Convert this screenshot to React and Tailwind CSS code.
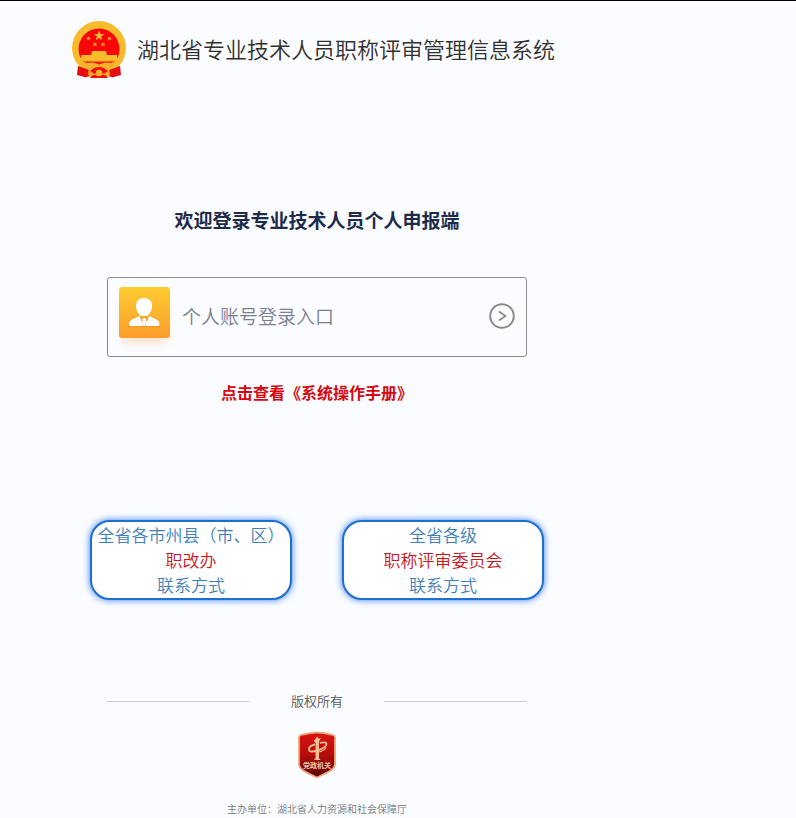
function Emblem() {
  return (
    <svg viewBox="0 0 56 60" className="h-[60px] w-14 shrink-0" aria-hidden="true">
      <circle cx="28" cy="28" r="27" fill="#f9bb2e" />
      <circle cx="28" cy="29" r="20.500" fill="#fa0508" />
      <path
        d="M28 10.500 L29.300 14.100 L33.100 14.200 L30.100 16.500 L31.200 20.200 L28 18 L24.800 20.200 L25.900 16.500 L22.900 14.200 L26.700 14.100 Z"
        fill="#fbc02d"
      />
      <g fill="#f99a26">
        <path d="M17.500 16 l.8 1.500 1.700.2-1.300 1.100.4 1.700-1.600-.9-1.600.9.4-1.700-1.300-1.100 1.700-.2z" />
        <path d="M38.500 16 l.8 1.500 1.700.2-1.300 1.100.4 1.700-1.600-.9-1.600.9.4-1.700-1.300-1.100 1.700-.2z" />
        <path d="M24 22 l.8 1.500 1.700.2-1.300 1.100.4 1.700-1.600-.9-1.600.9.4-1.700-1.300-1.100 1.700-.2z" />
        <path d="M32 22 l.8 1.500 1.700.2-1.300 1.100.4 1.700-1.600-.9-1.600.9.4-1.700-1.300-1.100 1.700-.2z" />
      </g>
      <path d="M21 31 H35 L36 35 H46 V40 H10 V35 H20 Z" fill="#fbbc2c" />
      <path d="M9 40 H47 L44 46 L36 51 H20 L12 46 Z" fill="#f9b12a" />
      <path d="M12 41.500 H44 L40 43 L34 42.500 L28 44.500 L22 42.500 L16 43 Z" fill="#f2180c" />
      <path d="M7 46 L18 50 L15 57.500 L6 55 Z" fill="#e60b0e" />
      <path d="M49 46 L38 50 L41 57.500 L50 55 Z" fill="#e60b0e" />
      <path d="M19 51 Q28 43 37 51 L34 53 L37 58 H19 L22 53 Z" fill="#f20d0b" />
      <path d="M13 51 L20 53 H36 L43 51 L41 57 L33 55.500 L31 57.500 H25 L23 55.500 L15 57 Z" fill="#f20d0b" />
      <circle cx="28" cy="53" r="3.200" fill="#fbb42a" />
      <path
        d="M17 52.500 L23 53.500 H33 L39 52.500 L38 56.500 L32 54.800 H24 L18 56.500 Z"
        fill="#fbb42a"
      />
    </svg>
  );
}

function PersonIcon() {
  return (
    <svg viewBox="0 0 51 51" className="size-[51px]" aria-hidden="true">
      <defs>
        <linearGradient id="person-bg" x1="0" y1="0" x2="0" y2="1">
          <stop offset="0" stopColor="#fdcc30" />
          <stop offset="1" stopColor="#fb9d2c" />
        </linearGradient>
      </defs>
      <rect width="51" height="51" rx="3" fill="url(#person-bg)" />
      <path d="M10 40 C10 33 15 33 20 30 H31 C36 33 41 33 41 40 Z" fill="#e68a20" opacity=".5" />
      <path
        d="M25 11 C30 11 33 14 33 19 C33 24 30 28.500 27 29 H23 C20 28.500 17 24 17 19 C17 14 20 11 25 11 Z"
        fill="#fff"
      />
      <path
        d="M20.500 29 L23 34.500 L24 31 H26.500 L27.500 34.500 L30 29 C35 32 40.500 32 40.500 37.500 Q40.500 39 39 39 H27 L26 32.500 H24.500 L23.500 39 H12 Q10 39 10 37.500 C10 32 16 32 20.500 29 Z"
        fill="#fff"
      />
      <path d="M23.500 33 L24.300 39 H26.200 L27 33 L26 31 H24.500 Z" fill="#fff" />
      <path d="M21.500 30 L23.300 34.500 M29 30 L27.200 34.500" stroke="#f5a32b" strokeWidth="1" />
    </svg>
  );
}

function Shield() {
  return (
    <svg viewBox="0 0 40 48" className="h-12 w-10" role="img" aria-label="党政机关">
      <defs>
        <linearGradient id="shield-bg" x1="0" y1="0" x2="0" y2="1">
          <stop offset="0" stopColor="#dc1210" />
          <stop offset="0.5" stopColor="#b50c0b" />
          <stop offset="1" stopColor="#570604" />
        </linearGradient>
      </defs>
      <path
        d="M20 1.500 C25 1.500 32 3 36 4 Q38 4.500 38 6.500 V33 C38 39 29 42 20 46.500 C11 42 2 39 2 33 V6.500 Q2 4.500 4 4 C8 3 15 1.500 20 1.500 Z"
        fill="url(#shield-bg)"
        stroke="#e9a77d"
        strokeWidth="1.800"
      />
      <path
        d="M18.500 8 L20 5.500 L21.500 7.500 L24 7 L22.500 9.500 L22 12 V27 L23.500 29 H17 L18.500 27 V12 L16.500 9.500 Z"
        fill="#f5bd94"
      />
      <path
        d="M18 13.500 C11 15 10 20.500 15 20.500 C21 20.500 29.500 16 29.500 13 C29.500 11 26 11 23 12"
        fill="none"
        stroke="#f5bd94"
        strokeWidth="1.800"
      />
      <path d="M22 21 Q27 20 29 16.500" fill="none" stroke="#f5bd94" strokeWidth="1.200" />
      <text x="20" y="37" textAnchor="middle" fontSize="7" fontWeight="700" fill="#f5c9a6">
        党政机关
      </text>
    </svg>
  );
}

function ContactLink({ scope, office }) {
  return (
    <a
      href="#contact"
      className="h-20 min-w-0 flex-1 rounded-[20px] border-2 border-[#1f6fd0] bg-white text-center text-[17px] leading-[25px] font-[350] whitespace-nowrap text-[#3f7fb8] shadow-[0_0_7px_#2f7cf0]"
    >
      <span className="block">{scope}</span>
      <span className="block text-[#c8161d]">{office}</span>
      <span className="block">联系方式</span>
    </a>
  );
}

export default function App() {
  return (
    <div className="min-h-screen border-t border-black bg-[#fbfcff] font-['Noto_Sans_CJK_SC',sans-serif]">
      <div className="flex w-full max-w-[634px] flex-col">
        <header className="flex items-center gap-2.5 pt-[19px] pl-[71px]">
          <Emblem />
          <h1 className="pb-1 text-[22px] leading-8 font-[350] whitespace-nowrap text-[#303030]">
            湖北省专业技术人员职称评审管理信息系统
          </h1>
        </header>

        <main className="flex flex-col items-center pt-[126px]">
          <h2 className="text-[19px] leading-7 font-bold text-[#1e2c4a]">
            欢迎登录专业技术人员个人申报端
          </h2>

          <button
            type="button"
            className="mt-[43px] flex h-20 w-full max-w-[420px] items-center rounded-[3px] border border-[#8c8c8c] px-[11px] pb-0.5 text-left"
          >
            <span className="mb-2 rounded shadow-[0_8px_10px_-4px_#fbdcc0]">
              <PersonIcon />
            </span>
            <span className="ml-3 flex-1 text-[19px] leading-7 font-[350] text-[#7b8091]">
              个人账号登录入口
            </span>
            <svg
              viewBox="0 0 26 26"
              className="size-[26px]"
              fill="none"
              stroke="#8a8a8a"
              aria-hidden="true"
            >
              <circle cx="13" cy="13" r="11.800" strokeWidth="2" />
              <path d="M10 8.500 L16.500 13 L10 17.500" strokeWidth="1.700" />
            </svg>
          </button>

          <a href="#manual" className="mt-[23px] text-base leading-6 font-bold text-[#d9060f]">
            点击查看《系统操作手册》
          </a>

          <div className="mt-[116px] flex w-full max-w-[454px] gap-[50px]">
            <ContactLink scope="全省各市州县（市、区）" office="职改办" />
            <ContactLink scope="全省各级" office="职称评审委员会" />
          </div>
        </main>

        <footer className="flex flex-col items-center pt-[91px]">
          <div className="flex w-full max-w-[420px] items-center gap-[41px]">
            <span className="h-px flex-1 bg-[#cfcfcf]" />
            <span className="text-[13px] leading-5 font-[350] text-[#555]">版权所有</span>
            <span className="h-px flex-1 bg-[#cfcfcf]" />
          </div>
          <div className="mt-5">
            <Shield />
          </div>
          <p className="mt-[22px] text-[10px] leading-4 font-[350] text-[#777]">
            主办单位：湖北省人力资源和社会保障厅
          </p>
        </footer>
      </div>
    </div>
  );
}
